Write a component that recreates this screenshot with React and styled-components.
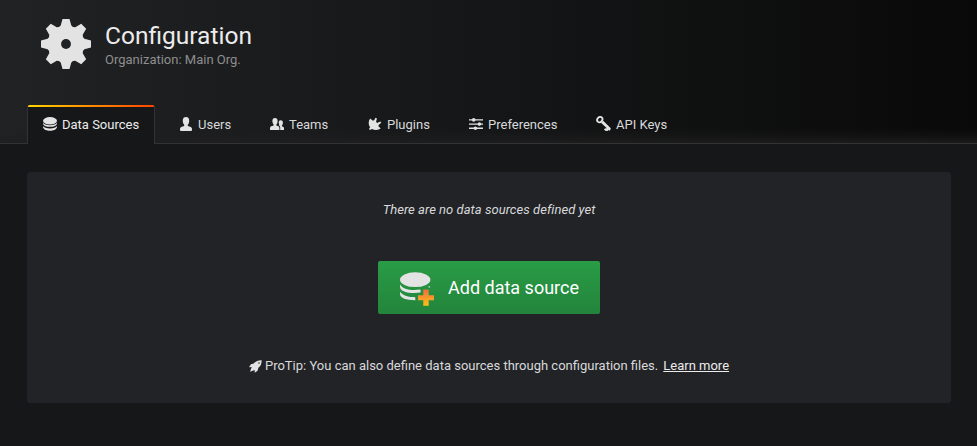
import React from "react";
import styled, { createGlobalStyle } from "styled-components";

const GlobalStyle = createGlobalStyle`
  *, *::before, *::after { box-sizing: border-box; }
  html, body { margin: 0; background: #161719; }
  body {
    font-family: Roboto, "Liberation Sans", sans-serif;
    font-size: 13px;
    line-height: 20px;
    color: #d8d9da;
  }
`;

const Page = styled.div`
  height: 446px;
  overflow: hidden;
  background: #161719;
`;

const Header = styled.header`
  height: 144px;
  padding: 0 27px;
  display: flex;
  flex-direction: column;
  justify-content: space-between;
  background:
    linear-gradient(transparent, rgba(31, 31, 32, 0.25) 45%, rgba(31, 31, 32, 0.8)) bottom / 100% 15px no-repeat,
    linear-gradient(90deg, #212224, #151617 50%, #090909);
  border-bottom: 1px solid #333335;
`;

const Heading = styled.div`
  display: flex;
  padding: 19px 0 0 14px;
`;

const HeadingText = styled.div`
  padding: 2px 0 0 14px;
`;

const Title = styled.h1`
  margin: 0;
  font-size: 24.5px;
  font-weight: 400;
  line-height: 29px;
  color: #ececec;
`;

const Subtitle = styled.div`
  font-size: 13px;
  line-height: 20px;
  color: #8e8e8e;
`;

const Tabs = styled.nav`
  display: flex;
  margin-bottom: -1px;
`;

const Tab = styled.a`
  display: flex;
  align-items: center;
  height: 39px;
  width: ${(p) => p.$width}px;
  padding: 1px 0 0 ${(p) => p.$inset || 15}px;
  gap: 5px;
  white-space: nowrap;
  color: ${(p) => (p.$active ? "#ececec" : "#d8d9da")};
  ${(p) =>
    p.$active &&
    `
    border: solid #333335;
    border-width: 0 1px;
    border-radius: 2px 2px 0 0;
    background: linear-gradient(90deg, #ffd500 0%, #ff4400 99%) top / 100% 2px no-repeat, #161719;
    background-origin: border-box;
  `}
`;

const Icon = styled.svg`
  display: block;
  flex: none;
  width: ${(p) => p.$w}px;
  height: ${(p) => p.$h || p.$w}px;
  margin-bottom: ${(p) => p.$lift || 0}px;
  margin-top: ${(p) => p.$drop || 0}px;
  fill: #e3e3e3;
`;

const Main = styled.main`
  padding: 28px 26px 0 27px;
`;

const Card = styled.section`
  height: 231px;
  padding-top: 28px;
  display: flex;
  flex-direction: column;
  align-items: center;
  border-radius: 3px;
  background: #222327;
`;

const EmptyMessage = styled.em`
  font-size: 13px;
  line-height: 20px;
  letter-spacing: 0.04px;
`;

const AddButton = styled.button`
  display: flex;
  align-items: center;
  width: 222px;
  height: 53px;
  margin-top: 41px;
  padding: 0 0 0 21px;
  gap: 13px;
  border: 0;
  border-radius: 2px;
  background: linear-gradient(#299c46, #23843b);
  font: 400 18px/24px Roboto, "Liberation Sans", sans-serif;
  white-space: nowrap;
  color: #fff;
`;

const Tip = styled.p`
  display: flex;
  align-items: center;
  margin: 42px 0 0;
  gap: 3px;
`;

const LearnMore = styled.a`
  margin-left: 2px;
  color: #ececec;
  text-decoration: underline;
`;

const teeth = [0, 45, 90, 135, 180, 225, 270, 315];

const GearIcon = () => (
  <Icon $w={50} viewBox="-25 -25 50 50">
    {teeth.map((a) => (
      <path key={a} transform={`rotate(${a})`} d="M-3.5-25H3.5L5.3-18.4L7-16.9L0 0L-7-16.9L-5.3-18.4Z" />
    ))}
    <circle r="18" />
    <circle r="4.9" fill="#202123" />
  </Icon>
);

const DatabaseIcon = () => (
  <Icon $w={14} $lift={2} viewBox="0 0 14 14">
    <ellipse cx="7" cy="3.8" rx="7" ry="3.7" />
    <path d="M0 5.8C1.3 9 12.7 9 14 5.8V7C12.7 10.8 1.3 10.8 0 7Z" />
    <path d="M0 9C1.3 12.2 12.7 12.2 14 9V10.2C12.7 15 1.3 15 0 10.2Z" />
  </Icon>
);

const UserIcon = () => (
  <Icon $w={13} $h={14} $lift={2} viewBox="0 0 13 14" preserveAspectRatio="none">
    <path d="M6 0C8.3 0 9.3 1.6 9.2 4C9.1 6 8.7 6.8 7.8 7.7V9C10 9.5 12 10 12 11.7V13Q12 14 11 14H1Q0 14 0 13V11.7C0 10 2 9.5 4.2 9V7.7C3.3 6.8 2.9 6 2.8 4C2.7 1.6 3.7 0 6 0Z" />
  </Icon>
);

const TeamIcon = () => (
  <Icon $w={14} $h={12} $lift={2} viewBox="0 0 14 12">
    <path d="M5 0C7.1 0 7.7 1.5 7.6 3.3C7.5 5 7.1 5.8 6.4 6.4V7.5C8.2 8 9.4 8.4 9.4 10V12H0V10C0 8.4 1.8 8 3.6 7.5V6.4C2.9 5.8 2.5 5 2.4 3.3C2.3 1.5 2.9 0 5 0Z" />
    <path d="M10.7 2.3C12.5 2.3 13 3.5 12.9 5C12.8 6.3 12.5 6.8 11.9 7.3V8.2C13.1 8.6 14 9 14 10.2V12H10.2V9.6C10.2 8.5 9.7 7.8 8.9 7.3C9.2 7.1 9.3 6.9 9.1 6.5C8.3 4.4 8.7 2.3 10.7 2.3Z" />
  </Icon>
);

const PlugIcon = () => (
  <Icon $w={14} $lift={2} viewBox="0 0 14 14">
    <path d="M2.2 1.5L4.6 3.6L6 3.5L7.5.8L9 1.4L8 4.8L9.2 6.1L12.3 4.4L13.3 5.7L10.6 7.9L10.5 9.2L12.7 11.4L11.8 12.1C9 13.4 6.2 13.3 4 11.9L2 13L1 12.1L2.1 10.2C.2 7.8.2 4.1 2.2 1.5Z" />
  </Icon>
);

const SlidersIcon = () => (
  <Icon $w={14} $h={12} $lift={2} viewBox="0 0 14 12">
    <path d="M0 1.2H14V2.6H0ZM0 5.4H14V6.8H0ZM0 9.6H14V11H0Z" />
    <circle cx="4.7" cy="1.9" r="1.8" />
    <circle cx="10.4" cy="6.1" r="1.8" />
    <circle cx="6.4" cy="10.2" r="1.8" />
  </Icon>
);

const KeyIcon = () => (
  <Icon $w={15} $lift={3} viewBox="0 0 15 15">
    <ellipse cx="3.8" cy="3.6" rx="2.4" ry="2.9" transform="rotate(38 3.8 3.6)" fill="none" stroke="#e3e3e3" strokeWidth="1.8" />
    <path d="M5 6.7L7.2 4.8L14.8 12.2L14 14.8L12.7 14L11.5 15L9.2 14.7L8 13.6L9.2 12.3L10.3 12.6L10.6 12Z" />
  </Icon>
);

const RocketIcon = () => (
  <Icon $w={13} viewBox="0 0 13 13">
    <path fillRule="evenodd" d="M12.6.3C9.2.2 6.8 1.2 4.8 3.5L1.9 4.3L0 7.2L2.7 7.1L1 11.7L5.7 10L5.7 12.7L8.6 10.7L9.4 7.8C11.7 6 12.8 3.8 12.6.3ZM10 2.2A.8.8 0 1 1 10 3.8A.8.8 0 1 1 10 2.2Z" />
  </Icon>
);

const AddDatabaseIcon = () => (
  <Icon $w={36} $h={34} $drop={3} viewBox="0 0 36 34">
    <defs>
      <linearGradient id="plus" x1="0" y1="0" x2="0" y2="1">
        <stop offset="0" stopColor="#f26e3f" />
        <stop offset="1" stopColor="#fbc116" />
      </linearGradient>
    </defs>
    <ellipse cx="16.2" cy="7.7" rx="15.2" ry="7.4" />
    <path d="M1 12.4C4 17.4 12 18.8 20.5 17.6Q21.6 17.5 21.6 18.3V20.6C12 21.9 1 20.4 1 14.8Z" />
    <path d="M1 19.7C4 23.7 10 25.4 15.3 25Q16.3 25 16.3 26V28.3C8 28.4 1 26.5 1 22.1Z" />
    <path d="M29.4 14.6Q31.3 13.6 31.1 14.9Q31 15.7 29.6 15.6Z" />
    <path d="M24.3 17.5H29.7V23.2H35V28.2H29.7V33.8H24.3V28.2H19V23.2H24.3Z" fill="url(#plus)" />
  </Icon>
);

export default function App() {
  return (
    <Page>
      <GlobalStyle />
      <Header>
        <Heading>
          <GearIcon />
          <HeadingText>
            <Title>Configuration</Title>
            <Subtitle>Organization: Main Org.</Subtitle>
          </HeadingText>
        </Heading>
        <Tabs>
          <Tab $active $width={128}><DatabaseIcon />Data Sources</Tab>
          <Tab $width={100} $inset={25}><UserIcon />Users</Tab>
          <Tab $width={98}><TeamIcon />Teams</Tab>
          <Tab $width={101}><PlugIcon />Plugins</Tab>
          <Tab $width={127}><SlidersIcon />Preferences</Tab>
          <Tab $width={100}><KeyIcon />API Keys</Tab>
        </Tabs>
      </Header>
      <Main>
        <Card>
          <EmptyMessage>There are no data sources defined yet</EmptyMessage>
          <AddButton type="button"><AddDatabaseIcon />Add data source</AddButton>
          <Tip>
            <RocketIcon />
            <span>ProTip: You can also define data sources through configuration files.</span>
            <LearnMore>Learn more</LearnMore>
          </Tip>
        </Card>
      </Main>
    </Page>
  );
}
